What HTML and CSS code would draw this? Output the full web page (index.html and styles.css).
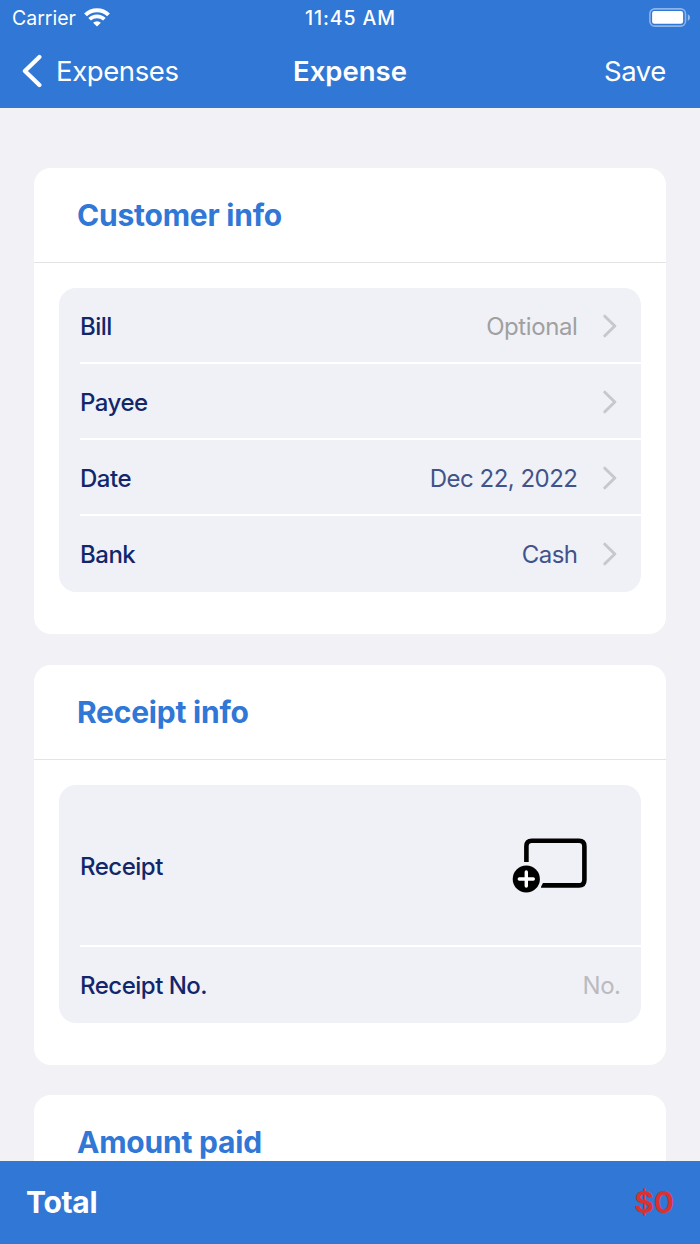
FILE: index.html
```html
<!DOCTYPE html>
<html lang="en">
<head>
<meta charset="UTF-8">
<meta name="viewport" content="width=device-width, initial-scale=1.0">
<title>Expense</title>
<link rel="stylesheet" href="styles.css">
</head>
<body>
<div class="screen">
    <header class="top">
        <div class="status-bar">
            <div class="carrier">
                <span class="carrier-name">Carrier</span>
                <svg class="wifi" width="26" height="20" viewBox="0 0 26 20">
                    <path d="M1.5 6.9a16.4 16.4 0 0 1 23 0" fill="none" stroke="#fff" stroke-width="4"/>
                    <path d="M5.6 11.3a10.6 10.6 0 0 1 14.8 0" fill="none" stroke="#fff" stroke-width="3.7"/>
                    <path d="M13 18.6l-3.9-3.8a5.6 5.6 0 0 1 7.8 0z" fill="#fff"/>
                </svg>
            </div>
            <span class="clock">11:45 AM</span>
            <svg class="battery" width="42" height="20" viewBox="0 0 42 20">
                <rect x="0.9" y="0.9" width="35.6" height="17.2" rx="4.8" fill="none" stroke="#fff" stroke-opacity="0.45" stroke-width="1.6"/>
                <rect x="3.1" y="3.1" width="31" height="12.6" rx="2.2" fill="#fff"/>
                <path d="M38.8 6.3q2.2 1 2.2 3.3t-2.2 3.3z" fill="#fff" fill-opacity="0.5"/>
            </svg>
        </div>
        <nav class="nav-bar">
            <a class="back">
                <svg class="back-icon" width="20" height="34" viewBox="0 0 20 34">
                    <path d="M17.4 2.9L2.9 17L17.4 31.1" fill="none" stroke="#fff" stroke-width="4.2" stroke-linecap="round" stroke-linejoin="round"/>
                </svg>
                <span>Expenses</span>
            </a>
            <h1 class="title">Expense</h1>
            <a class="save">Save</a>
        </nav>
    </header>

    <main class="content">
        <section class="card">
            <h2 class="card-title">Customer info</h2>
            <div class="group">
                <div class="row">
                    <span class="label">Bill</span>
                    <span class="value placeholder">Optional</span>
                    <svg class="chevron" width="14" height="24" viewBox="0 0 14 24"><path d="M1.8 2.2L11.8 12L1.8 21.8"/></svg>
                </div>
                <div class="row">
                    <span class="label">Payee</span>
                    <svg class="chevron" width="14" height="24" viewBox="0 0 14 24"><path d="M1.8 2.2L11.8 12L1.8 21.8"/></svg>
                </div>
                <div class="row">
                    <span class="label">Date</span>
                    <span class="value">Dec 22, 2022</span>
                    <svg class="chevron" width="14" height="24" viewBox="0 0 14 24"><path d="M1.8 2.2L11.8 12L1.8 21.8"/></svg>
                </div>
                <div class="row">
                    <span class="label">Bank</span>
                    <span class="value">Cash</span>
                    <svg class="chevron" width="14" height="24" viewBox="0 0 14 24"><path d="M1.8 2.2L11.8 12L1.8 21.8"/></svg>
                </div>
            </div>
        </section>

        <section class="card">
            <h2 class="card-title">Receipt info</h2>
            <div class="group">
                <div class="row row-tall">
                    <span class="label">Receipt</span>
                    <svg class="add-receipt" width="76" height="56" viewBox="0 0 76 56">
                        <path d="M14.4 24V8.2q0-5.4 5.4-5.4H67q5.4 0 5.4 5.4V42q0 5.4-5.4 5.4H29" fill="none" stroke="#000" stroke-width="4.6"/>
                        <path d="M26 52L32 40" fill="none" stroke="#f0f1f6" stroke-width="2.6"/>
                        <circle cx="14.3" cy="41" r="13.6" fill="#000"/>
                        <path d="M7.3 41h14M14.3 34v14" stroke="#fff" stroke-width="3.4" stroke-linecap="round"/>
                    </svg>
                </div>
                <div class="row">
                    <span class="label">Receipt No.</span>
                    <span class="value hint">No.</span>
                </div>
            </div>
        </section>

        <section class="card">
            <h2 class="card-title">Amount paid</h2>
        </section>
    </main>

    <footer class="total-bar">
        <span class="total-label">Total</span>
        <span class="total-amount">$0</span>
    </footer>
</div>
</body>
</html>
```

FILE: styles.css
```css
* {
    box-sizing: border-box;
}
body {
    margin: 0;
    font-family: Inter, "Liberation Sans", sans-serif;
    background: #f2f1f6;
}
svg {
    display: block;
    flex: none;
}
.screen {
    display: flex;
    flex-direction: column;
    height: 1244px;
    overflow: hidden;
}
.top {
    flex: none;
    height: 108px;
    background: #3077d6;
    color: #fff;
}
.status-bar {
    display: grid;
    grid-template-columns: 1fr auto 1fr;
    align-items: center;
    height: 36px;
    padding: 0 9px 0 12px;
    font-size: 19.5px;
}
.carrier {
    display: flex;
    align-items: center;
    gap: 8px;
}
.wifi {
    margin-top: -1px;
}
.clock {
    font-weight: 500;
    letter-spacing: 0.9px;
    margin-right: 2px;
}
.battery {
    justify-self: end;
    margin-top: -1px;
}
.nav-bar {
    display: grid;
    grid-template-columns: 1fr auto 1fr;
    align-items: center;
    height: 70px;
    padding: 0 22px;
    font-size: 27.5px;
    letter-spacing: -0.4px;
}
.back {
    display: flex;
    align-items: center;
    gap: 14px;
}
.title {
    margin: 0;
    font-size: 27.5px;
    font-weight: 600;
    letter-spacing: 0;
}
.save {
    justify-self: end;
    padding-right: 12px;
}
.content {
    flex: 1;
    min-height: 0;
    overflow: hidden;
    padding: 59.5px 34px 0;
}
.card {
    height: 466.5px;
    margin-bottom: 30.5px;
    background: #fff;
    border-radius: 17px;
}
.card:nth-child(2) {
    height: 400.5px;
    margin-bottom: 30px;
}
.card-title {
    margin: 0;
    height: 95px;
    padding-left: 43px;
    border-bottom: 1px solid #e4e4e6;
    line-height: 94px;
    font-size: 30px;
    font-weight: 700;
    letter-spacing: -0.22px;
    color: #3077d6;
}
.group {
    margin: 25.5px 25.5px 0 25px;
    padding-left: 21px;
    background: #f0f1f6;
    border-radius: 17px;
}
.row {
    display: flex;
    align-items: center;
    height: 76px;
    padding-right: 24px;
    font-size: 24px;
    box-shadow: inset 0 -2px #fff;
}
.row:last-child {
    box-shadow: none;
}
.row-tall {
    height: 162px;
}
.label {
    font-weight: 500;
    letter-spacing: -0.5px;
    color: #12276b;
    margin-right: auto;
}
.value {
    letter-spacing: -0.5px;
    color: #41538a;
}
.placeholder {
    color: #a0a0a0;
    letter-spacing: -0.4px;
}
.hint {
    color: #bbbbbf;
    margin-right: -4px;
}
.chevron {
    margin-left: 25px;
}
.chevron path {
    fill: none;
    stroke: #c7c8cb;
    stroke-width: 3;
    stroke-linecap: round;
    stroke-linejoin: round;
}
.add-receipt {
    margin-right: 29px;
}
.total-bar {
    flex: none;
    display: flex;
    align-items: center;
    justify-content: space-between;
    height: 83px;
    padding: 0 26px 1px;
    background: #3077d6;
    color: #fff;
    font-size: 30px;
    font-weight: 700;
}
.total-label {
    letter-spacing: -0.3px;
}
.total-amount {
    color: #d83232;
}
```
